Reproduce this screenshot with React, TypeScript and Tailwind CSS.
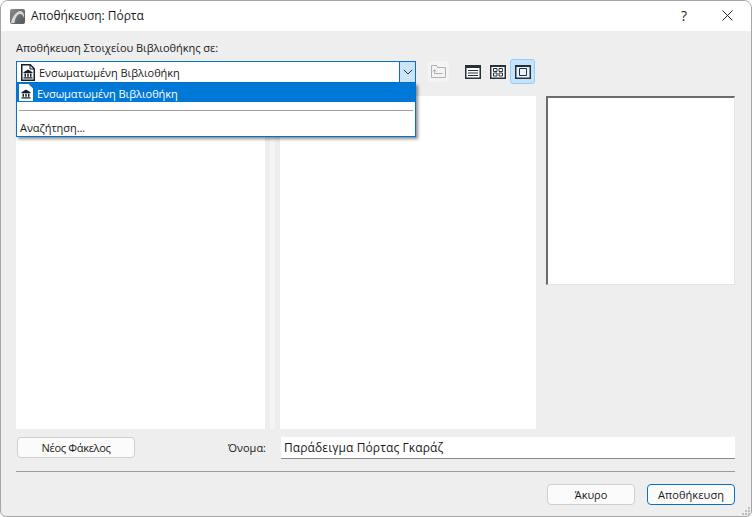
import * as React from "react"

function LibIcon({ white }: { white?: boolean }) {
  const c = "#16202a"
  return (
    <svg width="14" height="17" viewBox="0 0 14 17" className="shrink-0">
      <path d="M.75.75h8.5l4 4v11.500H.75z" fill="#fff" stroke={white ? "#fff" : c} strokeWidth="1.500" />
      <path d="M9 1v4h4" fill="none" stroke={white ? "#fff" : c} strokeWidth="1" />
      <path d="M7 5.500L2.500 8.200v1.100h9V8.200z" fill={c} />
      <path d="M3.500 9.800h1.500v3H3.500zM6.250 9.800h1.500v3H6.250zM9 9.800h1.500v3H9z" fill={c} />
      <path d="M2.500 13.200h9v1.300h-9z" fill={c} />
    </svg>
  )
}

function ViewButton({ active, children }: { active?: boolean; children: React.ReactNode }) {
  return (
    <div className={"w-[25px] h-[25px] flex items-center justify-center rounded-[3px] border " + (active ? "bg-[#c4e3fc] border-[#99ccf5]" : "border-transparent")}>
      {children}
    </div>
  )
}

export default function App() {
  return (
    <div className="w-[752px] h-[517px] relative overflow-hidden bg-[#eeeeee] border border-[#a6a6a6] rounded-t-[8px] rounded-b-[6px] text-[11px] leading-[16px] tracking-[-0.05px] text-[#1a1a1a] font-['Open_Sans','Noto_Sans',sans-serif] flex flex-col">
      {/* title bar */}
      <div className="h-[30px] shrink-0 bg-white flex items-center pl-[9px]">
        <svg width="15" height="15" viewBox="0 0 15 15" className="shrink-0">
          <defs>
            <linearGradient id="titleIcon" x1="0" y1="0" x2="1" y2="1">
              <stop offset="0" stopColor="#8a8a90" />
              <stop offset="1" stopColor="#55555c" />
            </linearGradient>
          </defs>
          <rect width="15" height="15" rx="2" fill="url(#titleIcon)" />
          <path d="M1 14C2 8 5.500 3 10 2c2 0 3.500 1.500 4 4v3C13 6 11.500 4.500 9.500 5 6.500 6 5 10 4.500 14z" fill="#d8d8da" />
        </svg>
        <span className="ml-[6px] text-[12px]">Αποθήκευση: Πόρτα</span>
        <span className="ml-auto mr-[35px] text-[14px] font-medium text-[#222]">?</span>
        <svg width="11" height="11" viewBox="0 0 11 11" className="mr-[18px] mb-[1px]">
          <path d="M.5.5l10 10M10.500.5l-10 10" stroke="#222" strokeWidth="1" fill="none" />
        </svg>
      </div>

      {/* body */}
      <div className="flex-1 flex flex-col pl-[15px] pr-[16px] pt-[9px]">
        <div className="h-[16px] text-[#222]">Αποθήκευση Στοιχείου Βιβλιοθήκης σε:</div>

        <div className="flex items-start mt-[5px] h-[22px]">
          <div className="w-[400px] h-[22px] bg-white border border-[#0b6fc4] flex items-center pl-[4px] relative shrink-0">
            <LibIcon />
            <span className="ml-[4px] pt-[1px]">Ενσωματωμένη Βιβλιοθήκη</span>
            <div className="absolute right-0 top-0 bottom-0 w-[16px] bg-[#cce4f7] border-l border-[#0b6fc4] flex items-center justify-center">
              <svg width="10" height="6" viewBox="0 0 10 6">
                <path d="M.8.8L5 5 9.200.8" fill="none" stroke="#333" strokeWidth="1" />
              </svg>
            </div>
          </div>
          <div className="ml-[12px] w-[21px] h-[21px] rounded-[4px] bg-[#f4f4f4] flex items-center justify-center">
            <svg width="15" height="13" viewBox="0 0 15 13">
              <path d="M.5 12.500V.5h5l1 2h8v10z" fill="none" stroke="#b0b0b0" />
              <path d="M3.500 8.500h8M3.500 8.500V5M1.800 6.500l1.700-2 1.700 2" fill="none" stroke="#b0b0b0" />
            </svg>
          </div>
          <div className="ml-[11px] flex -mt-[2px]">
            <ViewButton>
              <svg width="16" height="14" viewBox="0 0 16 14">
                <path d="M.75.75h14.500v12.500H.75z" fill="#fff" stroke="#27313a" strokeWidth="1.500" />
                <path d="M1 1h14v2H1z" fill="#27313a" />
                <path d="M3 5.500h10M3 8h10M3 10.500h10" stroke="#27313a" />
              </svg>
            </ViewButton>
            <ViewButton>
              <svg width="16" height="14" viewBox="0 0 16 14">
                <path d="M.75.75h14.500v12.500H.75z" fill="#fff" stroke="#27313a" strokeWidth="1.500" />
                <path d="M1 1h14v1H1z" fill="#27313a" />
                <path d="M3.500 3.500h3.500v3h-3.500zM9 3.500h3.500v3H9zM3.500 8h3.500v3h-3.500zM9 8h3.500v3H9z" fill="none" stroke="#27313a" />
              </svg>
            </ViewButton>
            <ViewButton active>
              <svg width="16" height="14" viewBox="0 0 16 14">
                <path d="M.75.75h14.500v12.500H.75z" fill="#e8f4fd" stroke="#27313a" strokeWidth="1.500" />
                <path d="M1 1h14v1H1z" fill="#27313a" />
                <path d="M4.500 3.500h7v7h-7z" fill="none" stroke="#27313a" />
              </svg>
            </ViewButton>
          </div>
        </div>

        {/* panels */}
        <div className="flex mt-[13px] h-[333px]">
          <div className="w-[249px] bg-white" />
          <div className="w-[15px] flex justify-center">
            <div className="w-[5px] bg-[#f5f5f5]" />
          </div>
          <div className="w-[256px] bg-white" />
          <div className="ml-[10px] w-[189px] h-[189px] bg-white border-t-2 border-l-2 border-t-[#6b6b6b] border-l-[#6b6b6b] border-r border-b border-r-[#e4e4e4] border-b-[#e4e4e4]" />
        </div>

        {/* name row */}
        <div className="flex items-start mt-[8px] h-[22px]">
          <button className="ml-[1px] w-[118px] h-[21px] bg-[#fbfbfb] border border-[#cfcfcf] rounded-[4px] text-[#1a1a1a] tracking-[-0.3px] flex items-center justify-center">Νέος Φάκελος</button>
          <div className="w-[131px] text-right h-[22px] flex items-center justify-end tracking-[0px]">Όνομα:</div>
          <div className="ml-[15px] flex-1 h-[22px] bg-white border-b border-[#8a8a8a] flex items-center pl-[3px] text-[12px] tracking-[0.1px]">Παράδειγμα Πόρτας Γκαράζ</div>
        </div>

        <div className="h-px bg-[#9c9c9c] mt-[12px]" />

        <div className="flex justify-end gap-[12px] mt-[12px]">
          <button className="w-[88px] h-[21px] bg-[#fbfbfb] border border-[#cfcfcf] rounded-[4px] flex items-center justify-center">Άκυρο</button>
          <button className="w-[88px] h-[21px] bg-[#fbfbfb] border border-[#0b6fc4] rounded-[4px] flex items-center justify-center tracking-[0.1px]">Αποθήκευση</button>
        </div>
      </div>

      {/* open dropdown */}
      <div className="absolute left-[15px] top-[82px] w-[400px] h-[54px] bg-white border border-t-0 border-[#0b6fc4] shadow-[2px_2px_3px_rgba(0,0,0,0.45)]">
        <div className="h-[19px] bg-[#0078d7] text-white flex items-start pl-[2px] pt-[1px]">
          <LibIcon white />
          <span className="ml-[4px] pt-[2px]">Ενσωματωμένη Βιβλιοθήκη</span>
        </div>
        <div className="h-px bg-[#a0a0a0] mt-[8px] mx-[2px]" />
        <div className="mt-[9px] pl-[3px]">Αναζήτηση...</div>
      </div>

      {/* resize grip */}
      <svg width="10" height="10" viewBox="0 0 10 10" className="absolute right-0 bottom-0">
        <path d="M7 1h2v2H7zM4 4h2v2H4zM7 4h2v2H7zM1 7h2v2H1zM4 7h2v2H4zM7 7h2v2H7z" fill="#bdbdbd" />
      </svg>
    </div>
  )
}
